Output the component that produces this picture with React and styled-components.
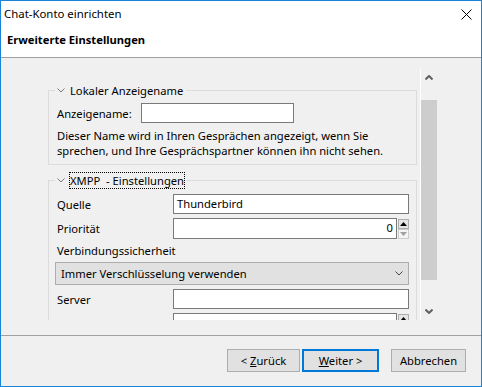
import React from "react"
import styled, { createGlobalStyle } from "styled-components"

const GlobalStyle = createGlobalStyle`
  body {
    margin: 0;
    background: #ffffff;
    font-family: "Segoe UI", "Noto Sans", "Liberation Sans", sans-serif;
    font-size: 11.2px;
    color: #000;
  }
`

const Window = styled.div`
  width: 482px;
  height: 387px;
  box-sizing: border-box;
  border: 1px solid #1883d7;
  display: flex;
  flex-direction: column;
  background: #f0f0f0;
  overflow: hidden;
`

const TitleBar = styled.div`
  height: 26px;
  flex: none;
  display: flex;
  align-items: center;
  justify-content: space-between;
  padding: 0 9px 0 3px;
  background: #ffffff;
  font-size: 11.4px;
`

const Title = styled.span`
  line-height: 16px;
`

const Header = styled.div`
  flex: none;
  box-sizing: border-box;
  height: 31px;
  padding: 5px 0 0 6px;
  background: #ffffff;
  border-bottom: 1px solid #a0a0a0;
`

const HeaderTitle = styled.span`
  font-weight: bold;
  line-height: 16px;
`

const Body = styled.div`
  height: 277px;
  flex: none;
  box-sizing: border-box;
  padding: 11px 0 0 31px;
`

const Viewport = styled.div`
  height: 251px;
  width: 405px;
  display: flex;
  overflow: hidden;
`

const Pane = styled.div`
  flex: 1;
  padding-top: 13px;
`

const Group = styled.fieldset`
  margin: ${p => (p.$second ? "7px" : "0")} 0 0 16px;
  width: 369px;
  min-width: 0;
  box-sizing: border-box;
  border: 1px solid #dcdcdc;
  padding: 0 7px 6px 6px;
`

const Legend = styled.legend`
  display: flex;
  align-items: center;
  padding: 0 2px 0 2px;
`

const LegendText = styled.span`
  line-height: 15px;
  border: 1px dotted ${p => (p.$focused ? "#000" : "transparent")};
  margin-left: 4px;
  white-space: pre;
`

const NameRow = styled.div`
  display: flex;
  align-items: center;
  margin-top: 4px;
`

const Label = styled.span`
  padding-left: 2px;
  width: ${p => (p.$w ? `${p.$w}px` : "auto")};
  min-height: 15px;
  flex: none;
  line-height: 15px;
  ${p => p.$span && "grid-column: 1 / -1;"}
`

const TextBox = styled.div`
  box-sizing: border-box;
  height: ${p => p.$h || 20}px;
  width: ${p => (p.$w ? `${p.$w}px` : "auto")};
  border: 1px solid #7a7a7a;
  background: #ffffff;
  padding: 0 3px;
  line-height: 18px;
  text-align: ${p => (p.$right ? "right" : "left")};
`

const Hint = styled.p`
  margin: 5px 0 0 0;
  padding-left: 2px;
  line-height: 15px;
`

const FormGrid = styled.div`
  display: grid;
  grid-template-columns: 118px 1fr;
  row-gap: 4px;
  align-items: center;
  margin-top: 5px;
`

const SpinRow = styled.div`
  display: flex;
`

const SpinButtons = styled.div`
  width: 12px;
  display: flex;
  flex-direction: column;
  padding-top: 1px;
`

const SpinButton = styled.div`
  height: 10px;
  box-sizing: border-box;
  margin-left: 1px;
  border: 1px solid ${p => (p.$disabled ? "#cccccc" : "#adadad")};
  background: ${p => (p.$disabled ? "#f4f4f4" : "#e5e5e5")};
  display: flex;
  align-items: center;
  justify-content: center;
`

const Select = styled.div`
  grid-column: 1 / -1;
  height: 23px;
  box-sizing: border-box;
  border: 1px solid #adadad;
  background: #e1e1e1;
  display: flex;
  align-items: center;
  justify-content: space-between;
  padding: 0 5px 0 5px;
`

const Scrollbar = styled.div`
  width: 17px;
  flex: none;
  box-sizing: border-box;
  border-left: 1px solid #ffffff;
  display: flex;
  flex-direction: column;
`

const ScrollArrow = styled.div`
  height: 17px;
  flex: none;
  display: flex;
  align-items: center;
  justify-content: center;
`

const Track = styled.div`
  flex: 1;
`

const Thumb = styled.div`
  height: 180px;
  background: #cdcdcd;
`

const Footer = styled.div`
  flex: 1;
  border-top: 1px solid #a0a0a0;
  display: flex;
  justify-content: flex-end;
  align-items: flex-start;
  padding: 13px 15px 0 0;
`

const Button = styled.button`
  height: 23px;
  width: ${p => p.$w}px;
  box-sizing: border-box;
  margin-left: ${p => p.$gap || 0}px;
  font: inherit;
  color: #000;
  background: #e1e1e1;
  border: ${p => (p.$default ? "2px solid #0078d7" : "1px solid #adadad")};
  padding: 0;
  line-height: 15px;
`

const Triangle = ({ down, color }) => (
  <svg width="7" height="4" viewBox="0 0 7 4">
    <path d={down ? "M0 0H7L3.5 4Z" : "M0 4H7L3.5 0Z"} fill={color} />
  </svg>
)

const Chevron = ({ color = "#7a7a7a" }) => (
  <svg width="8" height="5" viewBox="0 0 8 5">
    <path d="M0.5 0.5L4 4L7.5 0.5" stroke={color} fill="none" strokeWidth="1" />
  </svg>
)

const ScrollChevron = ({ up }) => (
  <svg width="8" height="5" viewBox="0 0 8 5">
    <path
      d={up ? "M0.5 4.5L4 1L7.5 4.5" : "M0.5 0.5L4 4L7.5 0.5"}
      stroke="#606060"
      fill="none"
      strokeWidth="2"
    />
  </svg>
)

const Spin = ({ value }) => (
  <SpinRow>
    <TextBox $h={21} $right style={{ flex: 1 }}>
      {value}
    </TextBox>
    <SpinButtons>
      <SpinButton>
        <Triangle color="#000" />
      </SpinButton>
      <SpinButton $disabled>
        <Triangle down color="#a0a0a0" />
      </SpinButton>
    </SpinButtons>
  </SpinRow>
)

const App = () => {
  return (
    <>
      <GlobalStyle />
      <Window>
        <TitleBar>
          <Title>Chat-Konto einrichten</Title>
          <svg width="11" height="11" viewBox="0 0 11 11">
            <path d="M0.5 0.5L10.5 10.5M10.5 0.5L0.5 10.5" stroke="#000" strokeWidth="1" />
          </svg>
        </TitleBar>
        <Header>
          <HeaderTitle>Erweiterte Einstellungen</HeaderTitle>
        </Header>
        <Body>
          <Viewport>
            <Pane>
              <Group>
                <Legend>
                  <Chevron />
                  <LegendText>Lokaler Anzeigename</LegendText>
                </Legend>
                <NameRow>
                  <Label $w={84}>Anzeigename:</Label>
                  <TextBox $w={153} />
                </NameRow>
                <Hint>
                  Dieser Name wird in Ihren Gesprächen angezeigt, wenn Sie
                  <br />
                  sprechen, und Ihre Gesprächspartner können ihn nicht sehen.
                </Hint>
              </Group>
              <Group $second>
                <Legend>
                  <Chevron />
                  <LegendText $focused>{"XMPP  - Einstellungen"}</LegendText>
                </Legend>
                <FormGrid>
                  <Label>Quelle</Label>
                  <TextBox>Thunderbird</TextBox>
                  <Label>Priorität</Label>
                  <Spin value="0" />
                  <Label $span>Verbindungssicherheit</Label>
                  <Select>
                    <span>Immer Verschlüsselung verwenden</span>
                    <Chevron color="#444" />
                  </Select>
                  <Label>Server</Label>
                  <TextBox />
                  <Label />
                  <Spin value="" />
                </FormGrid>
              </Group>
            </Pane>
            <Scrollbar>
              <ScrollArrow>
                <ScrollChevron up />
              </ScrollArrow>
              <Track>
                <Thumb style={{ marginTop: 14 }} />
              </Track>
              <ScrollArrow>
                <ScrollChevron />
              </ScrollArrow>
            </Scrollbar>
          </Viewport>
        </Body>
        <Footer>
          <Button $w={73}>
            &lt; <u>Z</u>urück
          </Button>
          <Button $w={77} $gap={2} $default>
            <u>W</u>eiter &gt;
          </Button>
          <Button $w={75} $gap={12}>
            Abbrechen
          </Button>
        </Footer>
      </Window>
    </>
  )
}

export default App
